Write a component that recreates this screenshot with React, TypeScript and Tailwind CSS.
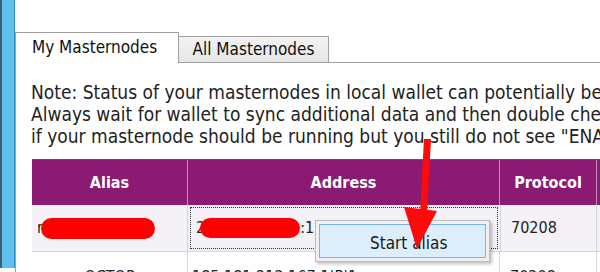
import React from "react";

const font = { fontFamily: '"DejaVu Sans Condensed", "DejaVu Sans", sans-serif' };

function Arrow() {
  return (
    <svg className="absolute left-0 top-0 pointer-events-none" width="600" height="272" viewBox="0 0 600 272">
      <polygon points="424,139 431,139 427,214 420,214" fill="#ff0a0a" />
      <polygon points="404,207 437,211 417,249" fill="#ff0a0a" />
    </svg>
  );
}

export default function App() {
  return (
    <div className="relative w-[600px] h-[272px] overflow-hidden bg-white flex" style={font}>
      {/* left window edge */}
      <div className="w-[15px] h-[268px] shrink-0 border-l-2 border-l-[#3d5f78] border-r border-r-[#2f8fc4] bg-[#5fc2ee]" />

      <div className="flex-1 flex flex-col pt-[33px]">
        {/* tab strip */}
        <div className="flex items-end h-[30px] border-b border-[#a0a0a0]">
          <div className="relative z-10 -mb-px h-[31px] w-[164px] bg-white border border-b-0 border-[#a0a0a0] flex items-center pl-[16px] text-[17px] text-[#111]">
            My Masternodes
          </div>
          <div className="h-[26px] w-[150px] bg-gradient-to-b from-[#f2f2f2] to-[#e6e6e6] border border-b-0 border-l-0 border-[#a0a0a0] flex items-center justify-center text-[17px] text-[#111]">
            All Masternodes
          </div>
        </div>

        {/* tab panel */}
        <div className="flex-1 border-l border-[#a0a0a0] pl-[16px] pt-[18px]">
          <div className="whitespace-nowrap text-[19px] leading-[22px] text-[#222] -ml-[1px]">
            <div>Note: Status of your masternodes in local wallet can potentially be incorrect.</div>
            <div>Always wait for wallet to sync additional data and then double check from another node</div>
            <div>if your masternode should be running but you still do not see "ENABLED" in "Status" field.</div>
          </div>

          <div className="mt-[12px] w-[700px] border-t border-[#5a5a5a]">
            <div className="grid grid-cols-[156px_312px_97px_135px] h-[45px] bg-[#8b1b72] text-white font-bold text-[16px]">
              <div className="flex items-center justify-center border-r border-[#c98dbb]">Alias</div>
              <div className="flex items-center justify-center border-r border-[#c98dbb]">Address</div>
              <div className="flex items-center justify-center border-r border-[#c98dbb]">Protocol</div>
              <div />
            </div>

            <div className="grid grid-cols-[156px_312px_97px_135px] h-[47px] bg-[#f4f2f6] text-[16px] text-[#222] border-b border-[#d6d6d6]">
              <div className="flex items-center pl-[5px] border-r border-[#d6d6d6]">
                <span>r</span>
                <span className="ml-[-2px] h-[21px] w-[114px] rounded-full bg-[#ff0000] blur-[0.6px]" />
              </div>
              <div className="m-[2px] flex items-center pl-[5px] border border-dotted border-[#333]">
                <span>2</span>
                <span className="ml-[-5px] h-[20px] w-[100px] rounded-full bg-[#ff0000] blur-[0.6px]" />
                <span>:1</span>
              </div>
              <div className="flex items-center pl-[10px] border-r border-l border-[#d6d6d6]">70208</div>
              <div />
            </div>

            <div className="grid grid-cols-[156px_312px_97px_135px] h-[47px] bg-white text-[16px] text-[#222]">
              <div className="flex justify-center pt-[13px] border-r border-[#d6d6d6]">OCTOP</div>
              <div className="flex pl-[4px] pt-[13px] border-r border-[#d6d6d6]">185.181.212.167:1|P|1</div>
              <div className="flex pl-[10px] pt-[13px] border-r border-[#d6d6d6]">70208</div>
              <div />
            </div>
          </div>
        </div>
      </div>

      {/* context menu */}
      <div className="absolute left-[315px] top-[220px] w-[175px] h-[42px] bg-[#f0f0f0] border border-[#bcbcbc] shadow-[2px_2px_3px_rgba(0,0,0,0.25)] p-[3px]">
        <div className="h-full border border-[#7fb3e3] bg-[#dcedfb] flex items-center pl-[50px] pt-[6px] text-[17px] text-[#1a1a1a]">
          Start alias
        </div>
      </div>

      <Arrow />
    </div>
  );
}
